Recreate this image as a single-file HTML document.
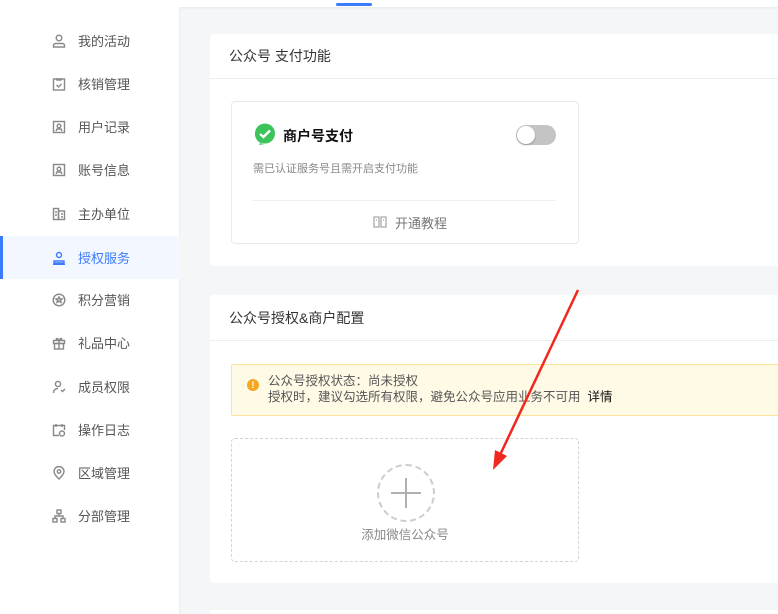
<!DOCTYPE html>
<html style="width:778px;height:614px;overflow:hidden"><head><meta charset="utf-8"><style>
*{margin:0;padding:0;box-sizing:border-box}
body{width:778px;height:614px;overflow:hidden;background:#f5f6f8;font-family:"Liberation Sans","Noto Sans CJK SC",sans-serif;position:relative;color:#333}
.top{position:absolute;left:0;top:0;width:778px;height:7px;background:#fff;box-shadow:0 1px 3px rgba(0,0,0,.06)}
.ind{position:absolute;left:336px;top:3px;width:36px;height:3px;background:#3b7cff;border-radius:2px}
.side{position:absolute;left:0;top:7px;width:180px;height:607px;background:#fff;border-right:1px solid #eceef2}
.it{position:absolute;left:0;width:180px;height:43px;display:flex;align-items:center;font-size:13px;color:#555}
.it svg{position:absolute;left:52px;width:14px;height:14px}
.it span{position:absolute;left:78px}
.it.act{background:#f3f7ff;color:#3b7cff}
.it.act:before{content:"";position:absolute;left:0;top:0;width:3px;height:43px;background:#3b7cff}
.card{position:absolute;left:210px;width:580px;background:#fff;border-radius:4px}
.ch{height:45px;border-bottom:1px solid #eceef2;padding-left:19px;line-height:45px;font-size:14px;color:#333}
</style></head><body>
<div class="top"></div><div class="ind"></div>
<div class="side">
<div class="it" style="top:12px"><svg viewBox="0 0 14 14" fill="none" stroke="#888" stroke-width="1.4"><circle cx="7" cy="4" r="2.8"/><path d="M1.5 13v-1.5a2 2 0 0 1 2-2h7a2 2 0 0 1 2 2V13z"/></svg><span>我的活动</span></div>
<div class="it" style="top:55px"><svg viewBox="0 0 14 14" fill="none" stroke="#888" stroke-width="1.4"><rect x="1.5" y="2" width="11" height="11"/><path d="M5 1v2h4V1M4.5 8l2 2 3-3"/></svg><span>核销管理</span></div>
<div class="it" style="top:98px"><svg viewBox="0 0 14 14" fill="none" stroke="#888" stroke-width="1.4"><rect x="1.5" y="1.5" width="11" height="11"/><circle cx="7" cy="6" r="1.8"/><path d="M4 11l1-2h4l1 2"/></svg><span>用户记录</span></div>
<div class="it" style="top:141px"><svg viewBox="0 0 14 14" fill="none" stroke="#888" stroke-width="1.4"><rect x="1.5" y="1.5" width="11" height="11"/><circle cx="7" cy="6" r="1.8"/><path d="M4 11l1-2h4l1 2"/></svg><span>账号信息</span></div>
<div class="it" style="top:185px"><svg viewBox="0 0 14 14" fill="none" stroke="#888" stroke-width="1.4"><rect x="1.5" y="1.5" width="5" height="11"/><rect x="6.5" y="4" width="6" height="8.5"/><path d="M3 5h2M3 8h2M9 7h2M9 10h2"/></svg><span>主办单位</span></div>
<div class="it act" style="top:229px"><svg viewBox="0 0 14 14" fill="none" stroke="#3b7cff" stroke-width="1.4"><circle cx="7" cy="4" r="2.5"/><path d="M2 10h10v2H2zM1 13.5h12"/></svg><span>授权服务</span></div>
<div class="it" style="top:271px"><svg viewBox="0 0 14 14" fill="none" stroke="#888" stroke-width="1.4"><circle cx="7" cy="7" r="5.8"/><path d="M7 4l1 2h2l-1.6 1.3.6 2L7 8.2 5 9.3l.6-2L4 6h2z"/></svg><span>积分营销</span></div>
<div class="it" style="top:314px"><svg viewBox="0 0 14 14" fill="none" stroke="#888" stroke-width="1.4"><rect x="1.5" y="4.5" width="11" height="3"/><rect x="2.5" y="7.5" width="9" height="5.5"/><path d="M7 4.5V13M7 4.5C5 1 3 3 5 4.5M7 4.5C9 1 11 3 9 4.5"/></svg><span>礼品中心</span></div>
<div class="it" style="top:358px"><svg viewBox="0 0 14 14" fill="none" stroke="#888" stroke-width="1.4"><circle cx="6" cy="4" r="2.6"/><path d="M1.5 13c0-3 2-4.5 4.5-4.5M9 10l1.5 1.5L13 9"/></svg><span>成员权限</span></div>
<div class="it" style="top:401px"><svg viewBox="0 0 14 14" fill="none" stroke="#888" stroke-width="1.4"><path d="M7 12.5H1.5v-10h11V7M4 1v3M10 1v3"/><circle cx="10" cy="10.5" r="2.5"/></svg><span>操作日志</span></div>
<div class="it" style="top:444px"><svg viewBox="0 0 14 14" fill="none" stroke="#888" stroke-width="1.4"><path d="M7 13S2 8.5 2 5.5a5 5 0 0 1 10 0C12 8.5 7 13 7 13z"/><circle cx="7" cy="5.5" r="1.7"/></svg><span>区域管理</span></div>
<div class="it" style="top:487px"><svg viewBox="0 0 14 14" fill="none" stroke="#888" stroke-width="1.4"><rect x="5" y="1" width="4" height="3.5"/><rect x="1" y="9.5" width="4" height="3.5"/><rect x="9" y="9.5" width="4" height="3.5"/><path d="M7 4.5v2.5M3 9.5V7h8v2.5"/></svg><span>分部管理</span></div>
</div>

<div class="card" style="top:34px;height:232px">
<div class="ch">公众号 支付功能</div>
<div style="position:absolute;left:21px;top:67px;width:348px;height:143px;border:1px solid #e8eaee;border-radius:4px">
<svg style="position:absolute;left:22px;top:21px" width="22" height="22" viewBox="0 0 22 22"><path d="M11 1a10 10 0 1 0 0 20h0l-6 1 2-3A10 10 0 0 1 11 1z" fill="#3cc35a"/><circle cx="11" cy="10.5" r="10" fill="#3cc35a"/><path d="M6 11l3.5 3L16 7.5" stroke="#fff" stroke-width="2.4" fill="none"/></svg>
<div style="position:absolute;left:51px;top:24px;font-size:14px;font-weight:bold;color:#111">商户号支付</div>
<div style="position:absolute;left:284px;top:23px;width:40px;height:20px;border-radius:10px;background:#c4c4c4"><div style="position:absolute;left:1px;top:1px;width:18px;height:18px;border-radius:9px;background:#fff;box-shadow:0 1px 2px rgba(0,0,0,.25)"></div></div>
<div style="position:absolute;left:21px;top:58px;font-size:11px;color:#888">需已认证服务号且需开启支付功能</div>
<div style="position:absolute;left:21px;top:98px;width:303px;border-top:1px solid #eceef2"></div>
<svg style="position:absolute;left:141px;top:113px" width="14" height="14" viewBox="0 0 14 14" fill="none" stroke="#aaa" stroke-width="1.3"><path d="M1 2h5v10H1zM8 2h5v10H8zM3 5h1M10 5h1"/></svg>
<div style="position:absolute;left:163px;top:111px;font-size:13px;color:#777">开通教程</div>
</div>
</div>

<div class="card" style="top:295px;height:288px">
<div class="ch" style="height:46px;line-height:46px">公众号授权&amp;商户配置</div>
<div style="position:absolute;left:21px;top:69px;width:570px;height:52px;background:#fffae6;border:1px solid #fbe39a;border-radius:2px">
<div style="position:absolute;left:15px;top:14px;width:12px;height:12px;border-radius:6px;background:#f5a623;color:#fff;font-size:9px;font-weight:bold;text-align:center;line-height:12px">!</div>
<div style="position:absolute;left:36px;top:8px;font-size:12.5px;line-height:16px;color:#555">公众号授权状态：尚未授权<br>授权时，建议勾选所有权限，避免公众号应用业务不可用 &nbsp;<span style="color:#111">详情</span></div>
</div>
<div style="position:absolute;left:21px;top:143px;width:348px;height:124px;border:1px dashed #d4d4d4;border-radius:4px">
<div style="position:absolute;left:145px;top:25px;width:58px;height:58px;border:2px dashed #ccc;border-radius:50%"></div>
<div style="position:absolute;left:159px;top:53px;width:30px;height:2px;background:#b0b0b0"></div>
<div style="position:absolute;left:173px;top:39px;width:2px;height:30px;background:#b0b0b0"></div>
<div style="position:absolute;left:0;width:346px;top:85px;text-align:center;font-size:12.5px;color:#888">添加微信公众号</div>
</div>
</div>
<div class="card" style="top:610px;height:4px"></div>

<svg style="position:absolute;left:0;top:0" width="778" height="614"><line x1="578" y1="290" x2="500" y2="455" stroke="#f0281e" stroke-width="2.5"/><path d="M493 470l2-20 12 6z" fill="#f0281e"/></svg>
</body></html>
